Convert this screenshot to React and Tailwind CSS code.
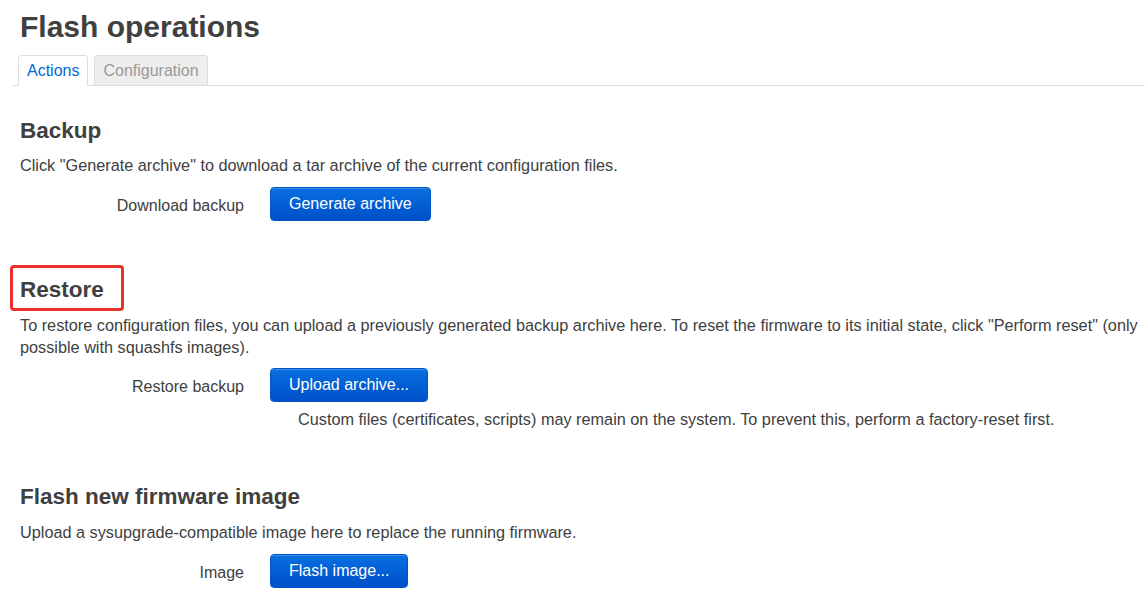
import React from 'react';

const font = { fontFamily: '"Liberation Sans", Arial, sans-serif' };

const Btn = ({ children }) => (
  <button className="h-[34px] rounded-[4px] border border-[#0054c6] bg-gradient-to-b from-[#0a6fe0] to-[#0050c8] px-[18px] text-[16px] text-white shadow-[inset_0_1px_0_rgba(255,255,255,0.2)]">
    {children}
  </button>
);

const Row = ({ label, children }) => (
  <div className="flex items-center">
    <div className="w-[224px] pt-[3px] text-right text-[16px] text-[#404040]">{label}</div>
    <div className="ml-[26px]">{children}</div>
  </div>
);

export default function App() {
  return (
    <div className="min-h-screen bg-white text-[#404040]" style={font}>
      <div className="pt-[9px]">
        <h1 className="px-5 text-[30px] font-bold leading-[36px] text-[#404040]">Flash operations</h1>

        <div className="ml-[13px] mt-[10px] flex items-end border-b border-[#ddd] pl-[5px]">
          <div className="-mb-px h-[31px] rounded-t-[4px] border border-b-white border-[#ddd] bg-white px-[8px] pt-[3px] text-[16px] text-[#0069d6]">
            Actions
          </div>
          <div className="ml-[6px] h-[30px] rounded-t-[4px] border border-b-0 border-[#ddd] bg-[#eee] px-[8px] pt-[3px] text-[16px] text-[#999]">
            Configuration
          </div>
        </div>

        <section className="pl-5 pr-[4px]">
          <h2 className="mt-[32px] text-[22.5px] font-bold leading-[26px]">Backup</h2>
          <p className="mt-[10px] text-[16.25px] leading-[22px]">
            Click "Generate archive" to download a tar archive of the current configuration files.
          </p>
          <div className="mt-[11px]">
            <Row label="Download backup">
              <Btn>Generate archive</Btn>
            </Row>
          </div>
        </section>

        <section className="pl-5 pr-[4px]">
          <div className="relative mt-[56px]">
            <h2 className="text-[22.5px] font-bold leading-[26px]">Restore</h2>
            <div className="absolute left-[-10px] top-[-12px] h-[46px] w-[114px] rounded-[4px] border-[3px] border-[#e8312b]" />
          </div>
          <p className="mt-[11px] text-[16.25px] leading-[22px]">
            To restore configuration files, you can upload a previously generated backup archive here. To reset the firmware to its initial state, click "Perform reset" (only possible with squashfs images).
          </p>
          <div className="mt-[10px]">
            <Row label="Restore backup">
              <Btn>Upload archive...</Btn>
            </Row>
          </div>
          <p className="ml-[278px] mt-[6px] text-[16.25px] leading-[22px]">
            Custom files (certificates, scripts) may remain on the system. To prevent this, perform a factory-reset first.
          </p>
        </section>

        <section className="pl-5 pr-[4px]">
          <h2 className="mt-[54px] text-[22.5px] font-bold leading-[26px]">Flash new firmware image</h2>
          <p className="mt-[11px] text-[16.25px] leading-[22px]">
            Upload a sysupgrade-compatible image here to replace the running firmware.
          </p>
          <div className="mt-[11px]">
            <Row label="Image">
              <Btn>Flash image...</Btn>
            </Row>
          </div>
        </section>
      </div>
    </div>
  );
}
